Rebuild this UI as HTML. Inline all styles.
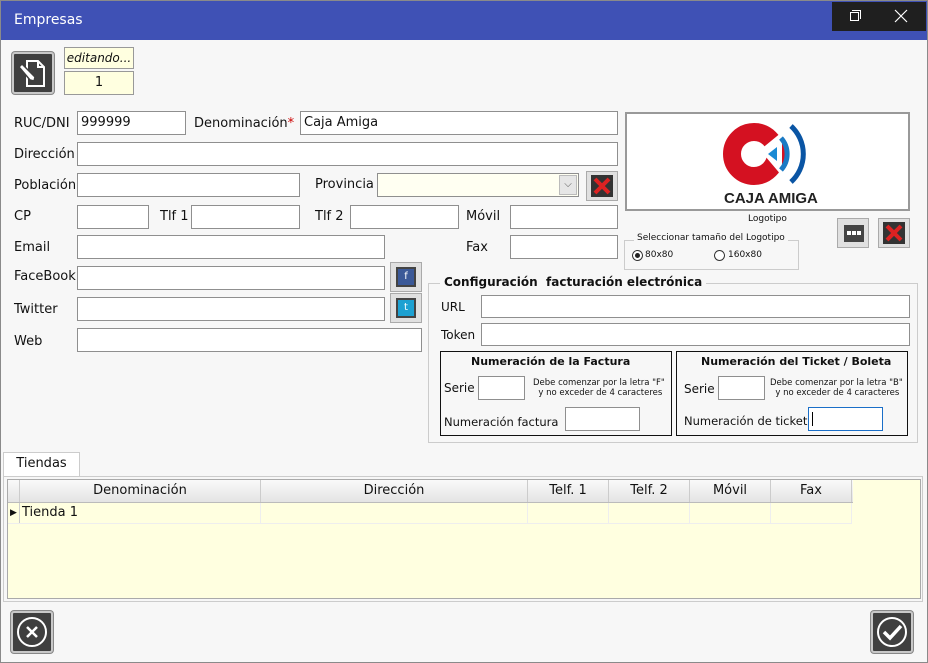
<!DOCTYPE html>
<html><head><meta charset="utf-8"><style>
*{box-sizing:border-box;margin:0;padding:0}
body{width:928px;height:663px;background:#f7f7f7;font-family:"DejaVu Sans","Liberation Sans",sans-serif;font-size:13px;color:#111;position:relative;overflow:hidden}
.a{position:absolute}
.in{position:absolute;background:#fff;border:1px solid #8f8f8f;height:24px}
.l{position:absolute;font-size:13px;line-height:16px}
.ib{position:absolute;background:#3f3f3f;border:2px solid #c8c8c8;border-radius:3px;box-shadow:0 0 0 1px #888}
.sb{position:absolute;background:#e0e0e0;border:1px solid #aaa}
.sm{font-size:9px;line-height:11px;position:absolute}
</style></head><body>
<div class="a" style="left:0;top:0;width:928px;height:663px;border:1px solid #8a8a8a;z-index:5;pointer-events:none"></div>
<div class="a" style="left:0;top:0;width:928px;height:40px;background:#3f51b5"></div>
<div class="a" style="left:14px;top:12px;color:#fff;font-size:14px">Empresas</div>
<div class="a" style="left:832px;top:2px;width:94px;height:29px;background:#1f1f1f"></div>
<div class="a" style="left:850px;top:12px;width:9px;height:9px;border:1px solid #fff"></div>
<div class="a" style="left:852px;top:10px;width:9px;height:9px;border-top:1px solid #fff;border-right:1px solid #fff"></div>
<svg class="a" style="left:894px;top:9px" width="14" height="14"><path d="M1 1L13 13M13 1L1 13" stroke="#fff" stroke-width="1.2"/></svg>

<div class="ib" style="left:12px;top:52px;width:42px;height:42px"><svg width="38" height="38"><path d="M13 7h11l6 6v19H13z" fill="none" stroke="#fff" stroke-width="2"/><path d="M24 7v6h6" fill="none" stroke="#fff" stroke-width="2"/><path d="M5 13l3-3 13 13-1 4-4-1z" fill="#fff" stroke="#3f3f3f" stroke-width="1.5"/></svg></div>
<div class="a" style="left:64px;top:47px;width:70px;height:22px;background:#ffffe0;border:1px solid #999;font-style:italic;text-align:center;line-height:20px;font-size:12px">editando...</div>
<div class="a" style="left:64px;top:71px;width:70px;height:24px;background:#ffffe0;border:1px solid #999;text-align:center;line-height:22px">1</div>

<div class="l" style="left:14px;top:116px">RUC/DNI</div><div class="in" style="left:77px;top:111px;width:109px;padding:3px 3px">999999</div>
<div class="l" style="left:194px;top:116px">Denominación<span style="color:#c00">*</span></div><div class="in" style="left:300px;top:111px;width:318px;padding:3px 3px">Caja Amiga</div>
<div class="l" style="left:14px;top:147px">Dirección</div><div class="in" style="left:77px;top:142px;width:541px"></div>
<div class="l" style="left:14px;top:178px">Población</div><div class="in" style="left:77px;top:173px;width:223px"></div>
<div class="l" style="left:315px;top:177px">Provincia</div><div class="in" style="left:377px;top:173px;width:202px;background:#fffff2"></div>
<div class="a" style="left:559px;top:175px;width:18px;height:20px;background:#e6e6e6;border:1px solid #bbb;font-size:10px;text-align:center;line-height:18px;color:#555">⌵</div>
<div class="sb" style="left:586px;top:171px;width:32px;height:30px"><svg width="30" height="28"><rect x="4" y="3" width="22" height="22" fill="#333"/><path d="M8 7l14 14M22 7L8 21" stroke="#d22" stroke-width="4"/></svg></div>
<div class="l" style="left:14px;top:209px">CP</div><div class="in" style="left:77px;top:205px;width:72px"></div>
<div class="l" style="left:160px;top:209px">Tlf 1</div><div class="in" style="left:191px;top:205px;width:109px"></div>
<div class="l" style="left:315px;top:209px">Tlf 2</div><div class="in" style="left:350px;top:205px;width:109px"></div>
<div class="l" style="left:466px;top:209px">Móvil</div><div class="in" style="left:510px;top:205px;width:108px"></div>
<div class="l" style="left:14px;top:240px">Email</div><div class="in" style="left:77px;top:235px;width:308px"></div>
<div class="l" style="left:466px;top:240px">Fax</div><div class="in" style="left:510px;top:235px;width:108px"></div>
<div class="l" style="left:14px;top:269px">FaceBook</div><div class="in" style="left:77px;top:266px;width:308px"></div>
<div class="sb" style="left:390px;top:262px;width:32px;height:30px"><div class="a" style="left:5px;top:4px;width:20px;height:20px;background:#3b5998;border:2px solid #444;color:#fff;font-size:10px;text-align:center;line-height:16px">f</div></div>
<div class="l" style="left:14px;top:302px">Twitter</div><div class="in" style="left:77px;top:297px;width:308px"></div>
<div class="sb" style="left:390px;top:293px;width:32px;height:30px"><div class="a" style="left:5px;top:4px;width:20px;height:20px;background:#1da1d2;border:2px solid #444;color:#fff;font-size:10px;text-align:center;line-height:16px">t</div></div>
<div class="l" style="left:14px;top:334px">Web</div><div class="in" style="left:77px;top:328px;width:345px"></div>

<div class="a" style="left:625px;top:112px;width:285px;height:99px;background:#fff;border:2px solid #999"></div>
<svg class="a" style="left:720px;top:114px" width="100" height="92"><circle cx="34" cy="40" r="22" fill="none" stroke="#d41121" stroke-width="18"/><path d="M40 36L62 18L62 62Z" fill="#fff"/><path d="M48 40l9-7v14z" fill="#1a8ad4"/><path d="M61 24a24 24 0 0 1 0 32" fill="none" stroke="#1a7ac4" stroke-width="5"/><path d="M71 12a38 38 0 0 1 0 56" fill="none" stroke="#0a55a4" stroke-width="5"/><text x="4" y="89" font-family="Liberation Sans" font-weight="bold" font-size="15" fill="#222">CAJA AMIGA</text></svg>
<div class="sm" style="left:748px;top:214px;font-size:9px">Logotipo</div>
<div class="sb" style="left:837px;top:218px;width:32px;height:30px"><div class="a" style="left:6px;top:6px;width:20px;height:17px;background:#444"><div class="a" style="left:3px;top:6px;width:4px;height:4px;background:#fff"></div><div class="a" style="left:8px;top:6px;width:4px;height:4px;background:#fff"></div><div class="a" style="left:13px;top:6px;width:4px;height:4px;background:#fff"></div></div></div>
<div class="sb" style="left:878px;top:218px;width:32px;height:30px"><svg width="30" height="28"><rect x="4" y="3" width="22" height="22" fill="#333"/><path d="M8 7l14 14M22 7L8 21" stroke="#d22" stroke-width="4"/></svg></div>
<div class="a" style="left:624px;top:240px;width:175px;height:30px;border:1px solid #ccc"></div>
<div class="sm" style="left:634px;top:233px;background:#f7f7f7;padding:0 3px">Seleccionar tamaño del Logotipo</div>
<div class="a" style="left:632px;top:250px;width:11px;height:11px;border:1px solid #333;border-radius:50%;background:#fff"><div class="a" style="left:2px;top:2px;width:5px;height:5px;background:#222;border-radius:50%"></div></div>
<div class="sm" style="left:645px;top:250px">80x80</div>
<div class="a" style="left:714px;top:250px;width:11px;height:11px;border:1px solid #333;border-radius:50%;background:#fff"></div>
<div class="sm" style="left:728px;top:250px">160x80</div>

<div class="a" style="left:428px;top:283px;width:490px;height:160px;border:1px solid #ccc"></div>
<div class="a" style="left:440px;top:275px;background:#f7f7f7;padding:0 4px;font-weight:bold;font-size:12px">Configuración&nbsp; facturación electrónica</div>
<div class="l" style="left:441px;top:299px;font-size:12px">URL</div><div class="in" style="left:481px;top:295px;width:429px;height:23px"></div>
<div class="l" style="left:441px;top:327px;font-size:12px">Token</div><div class="in" style="left:481px;top:323px;width:429px;height:23px"></div>
<div class="a" style="left:440px;top:351px;width:232px;height:85px;border:1px solid #111"></div>
<div class="a" style="left:471px;top:355px;font-weight:bold;font-size:11px">Numeración de la Factura</div>
<div class="l" style="left:444px;top:380px;font-size:12px">Serie</div><div class="in" style="left:478px;top:376px;width:47px"></div>
<div class="sm" style="left:533px;top:378px;font-size:8.5px;line-height:10px">Debe comenzar por la letra "F"<br>&nbsp; y no exceder de 4 caracteres</div>
<div class="l" style="left:444px;top:414px;font-size:11.5px">Numeración factura</div><div class="in" style="left:565px;top:407px;width:75px"></div>
<div class="a" style="left:676px;top:351px;width:232px;height:85px;border:1px solid #111"></div>
<div class="a" style="left:701px;top:355px;font-weight:bold;font-size:11px">Numeración del Ticket / Boleta</div>
<div class="l" style="left:684px;top:381px;font-size:12px">Serie</div><div class="in" style="left:718px;top:376px;width:47px"></div>
<div class="sm" style="left:770px;top:378px;font-size:8.5px;line-height:10px">Debe comenzar por la letra "B"<br>&nbsp; y no exceder de 4 caracteres</div>
<div class="l" style="left:684px;top:413px;font-size:11.5px">Numeración de ticket</div><div class="in" style="left:808px;top:407px;width:75px;border-color:#1a6fc8"><div class="a" style="left:3px;top:4px;width:1px;height:14px;background:#000"></div></div>

<div class="a" style="left:3px;top:452px;width:77px;height:25px;background:#fff;border:1px solid #ccc;border-bottom:none;text-align:center;line-height:22px">Tiendas</div>
<div class="a" style="left:3px;top:476px;width:920px;height:126px;border:1px solid #ccc;background:#f7f7f7"></div>
<div class="a" style="left:7px;top:479px;width:914px;height:120px;background:#ffffe0;border:1px solid #aaa"></div>
<div class="a" style="left:8px;top:480px;width:845px;height:23px;background:linear-gradient(#fafafa,#e4e4e4);border-bottom:1px solid #bbb"></div>
<div class="a" style="left:8px;top:480px;display:flex;font-size:13px;line-height:22px">
<div style="width:12px;border-right:1px solid #ccc"></div>
<div style="width:241px;text-align:center;border-right:1px solid #ccc">Denominación</div>
<div style="width:267px;text-align:center;border-right:1px solid #ccc">Dirección</div>
<div style="width:81px;text-align:center;border-right:1px solid #ccc">Telf. 1</div>
<div style="width:81px;text-align:center;border-right:1px solid #ccc">Telf. 2</div>
<div style="width:81px;text-align:center;border-right:1px solid #ccc">Móvil</div>
<div style="width:81px;text-align:center;border-right:1px solid #ccc">Fax</div></div>
<div class="a" style="left:8px;top:503px;display:flex;font-size:13px;line-height:20px;height:21px;border-bottom:1px solid #eee">
<div style="width:12px;border-right:1px solid #ccc;font-size:9px;text-align:center">▶</div>
<div style="width:241px;border-right:1px solid #eee;padding-left:2px">Tienda 1</div>
<div style="width:267px;border-right:1px solid #eee"></div>
<div style="width:81px;border-right:1px solid #eee"></div>
<div style="width:81px;border-right:1px solid #eee"></div>
<div style="width:81px;border-right:1px solid #eee"></div>
<div style="width:81px;border-right:1px solid #eee"></div></div>

<div class="ib" style="left:11px;top:611px;width:42px;height:42px"><svg width="38" height="38"><circle cx="19" cy="19" r="14" fill="none" stroke="#fff" stroke-width="2"/><path d="M14 14l10 10M24 14l-10 10" stroke="#fff" stroke-width="2.5"/></svg></div>
<div class="ib" style="left:871px;top:611px;width:42px;height:42px"><svg width="38" height="38"><circle cx="19" cy="19" r="14" fill="none" stroke="#fff" stroke-width="2"/><path d="M11 19l6 6 11-12" fill="none" stroke="#fff" stroke-width="3.5"/></svg></div>
</body></html>
